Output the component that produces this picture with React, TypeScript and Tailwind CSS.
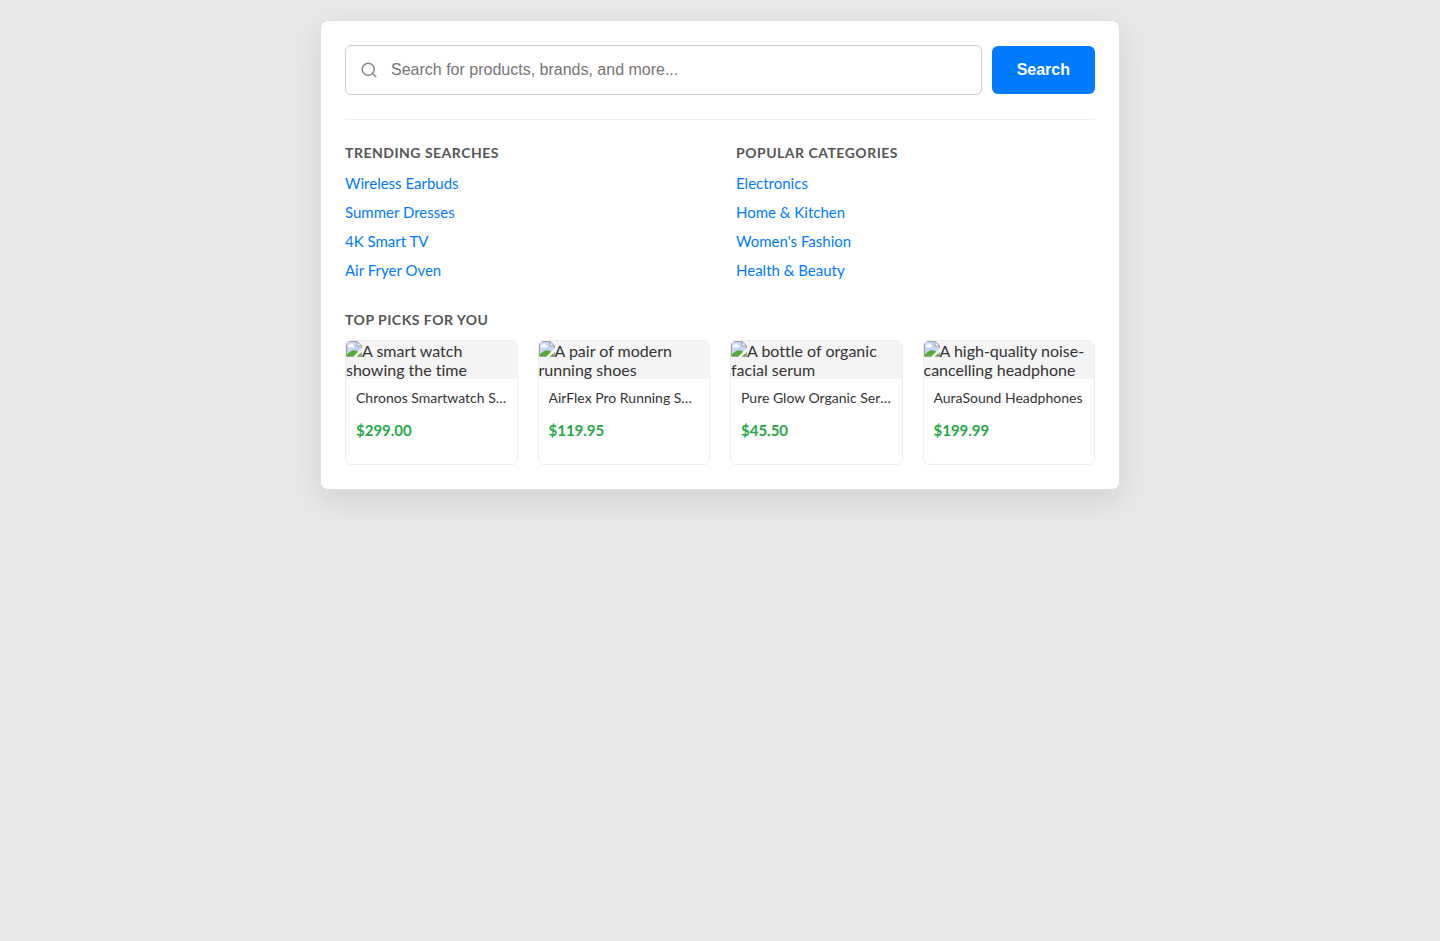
import React from "react";

type Product = { name: string; price: string; alt: string };

const linkGroups = [
  {
    title: "Trending Searches",
    links: ["Wireless Earbuds", "Summer Dresses", "4K Smart TV", "Air Fryer Oven"],
  },
  {
    title: "Popular Categories",
    links: ["Electronics", "Home & Kitchen", "Women's Fashion", "Health & Beauty"],
  },
];

const products: Product[] = [
  { name: "Chronos Smartwatch Series 5", price: "$299.00", alt: "A smart watch showing the time" },
  { name: "AirFlex Pro Running Shoes", price: "$119.95", alt: "A pair of modern running shoes" },
  { name: "Pure Glow Organic Serum", price: "$45.50", alt: "A bottle of organic facial serum" },
  { name: "AuraSound Headphones", price: "$199.99", alt: "A high-quality noise-cancelling headphone" },
];

function SearchIcon() {
  return (
    <svg
      aria-hidden="true"
      className="size-[18px] shrink-0 text-[#888888]"
      viewBox="0 0 24 24"
      fill="none"
      stroke="currentColor"
      strokeWidth="2"
      strokeLinecap="round"
      strokeLinejoin="round"
    >
      <circle cx="11" cy="11" r="8" />
      <line x1="21" y1="21" x2="16.65" y2="16.65" />
    </svg>
  );
}

function MissingImageIcon() {
  return (
    <svg aria-hidden="true" className="inline-block size-4 align-baseline" viewBox="0 0 16 16">
      <path d="M0.5 0.5H11L15.5 5V15.5H0.5Z" fill="#c3d5f8" stroke="#a0a0a0" />
      <path d="M2.5 6.5a1.5 1.5 0 0 1 0.8-2.7a2 2 0 0 1 3.7 0.1a1.4 1.4 0 0 1 0.6 2.6Z" fill="#fff" />
      <path d="M1 15V13.6C3.2 11 5.6 9.2 8 9.2C10.8 9.2 13.4 11.4 15 13.6V15Z" fill="#55ad36" />
      <path d="M16 6.8L7 16H10.5L16 10.4Z" fill="#f8f8f8" />
      <path d="M11 0.5V5H15.5Z" fill="#fff" stroke="#a0a0a0" />
    </svg>
  );
}

function SectionTitle({ children }: { children: React.ReactNode }) {
  return <h2 className="text-sm leading-[17px] font-bold tracking-[0.5px] text-[#555555] uppercase">{children}</h2>;
}

function ProductCard({ product }: { product: Product }) {
  return (
    <article className="overflow-hidden rounded-md border border-[#eeeeee]">
      <div role="img" aria-label={product.alt} className="bg-[#f4f4f4] leading-[19px]">
        <MissingImageIcon />
        {product.alt}
      </div>
      <div className="p-2.5 pb-6">
        <h3 className="truncate text-sm leading-[18px]">{product.name}</h3>
        <p className="mt-3.5 mb-px text-[15px] leading-[18px] font-bold text-[#28a745]">{product.price}</p>
      </div>
    </article>
  );
}

export default function App() {
  return (
    <div className="min-h-screen bg-[#e8e8e8] p-5 font-['Lato',sans-serif] text-base text-[#333333] [font-variant-ligatures:none]">
      <main className="mx-auto max-w-[800px] rounded-lg border border-[#e0e0e0] bg-white p-6 shadow-[0_10px_30px_rgba(0,0,0,0.1)]">
        <form
          role="search"
          className="flex items-center gap-2.5 border-b border-[#eeeeee] pb-6 font-['Liberation_Sans',sans-serif]"
          onSubmit={(event) => event.preventDefault()}
        >
          <label className="flex grow items-center gap-[13px] rounded-md border border-[#cccccc] px-3.5">
            <SearchIcon />
            <input
              type="search"
              aria-label="Search products"
              placeholder="Search for products, brands, and more..."
              className="h-12 min-w-0 grow bg-transparent outline-none placeholder:text-[#757575]"
            />
          </label>
          <button type="submit" className="h-12 rounded-md bg-[#007bff] px-[25px] font-bold text-white">
            Search
          </button>
        </form>

        <div className="grid grid-cols-2 gap-8 pt-6">
          {linkGroups.map((group) => (
            <nav key={group.title} aria-label={group.title}>
              <SectionTitle>{group.title}</SectionTitle>
              <ul className="mt-[13px] flex flex-col gap-[11px]">
                {group.links.map((link) => (
                  <li key={link} className="text-[15px] leading-[18px]">
                    <a href="#" className="text-[#007bff]">
                      {link}
                    </a>
                  </li>
                ))}
              </ul>
            </nav>
          ))}
        </div>

        <section className="pt-8">
          <SectionTitle>Top Picks For You</SectionTitle>
          <div className="mt-3 grid grid-cols-4 gap-5">
            {products.map((product) => (
              <ProductCard key={product.name} product={product} />
            ))}
          </div>
        </section>
      </main>
    </div>
  );
}
